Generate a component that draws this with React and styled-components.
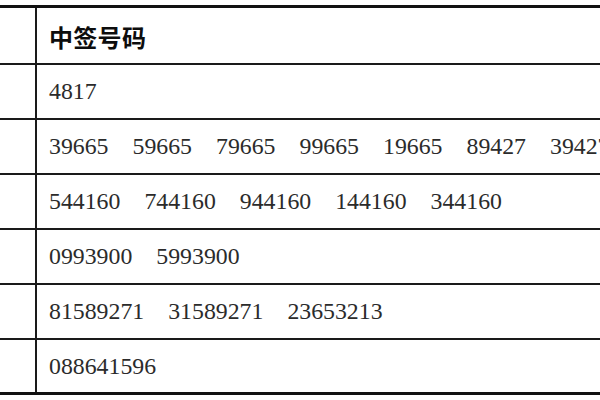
import React from 'react'
import styled, { createGlobalStyle } from 'styled-components'

const GlobalStyle = createGlobalStyle`
  html, body {
    margin: 0;
    padding: 0;
    background: #fff;
    overflow: hidden;
  }
  body {
    width: 600px;
    height: 400px;
  }
`

const rows = [
  ['4817'],
  ['39665', '59665', '79665', '99665', '19665', '89427', '39427'],
  ['544160', '744160', '944160', '144160', '344160'],
  ['0993900', '5993900'],
  ['81589271', '31589271', '23653213'],
  ['088641596'],
]

function App() {
  return (
    <>
      <GlobalStyle />
      <Page>
        <Table>
          <Row $header>
            <SideCell />
            <HeadCell>中签号码</HeadCell>
          </Row>
          {rows.map((nums, i) => (
            <Row key={i} $last={i === rows.length - 1}>
              <SideCell />
              <NumCell>
                {nums.map((n) => (
                  <Num key={n}>{n}</Num>
                ))}
              </NumCell>
            </Row>
          ))}
        </Table>
      </Page>
    </>
  )
}

const Page = styled.div`
  width: 600px;
  height: 400px;
  padding-top: 5px;
  box-sizing: border-box;
  overflow: hidden;
`

const Table = styled.div`
  width: 600px;
  border-top: 3px solid #111;
  border-bottom: 3px solid #111;
  display: flex;
  flex-direction: column;
`

const Row = styled.div`
  display: grid;
  grid-template-columns: 37px 1fr;
  height: ${({ $header, $last }) => ($header ? '55px' : $last ? '52px' : '53px')};
  border-bottom: ${({ $last }) => ($last ? 'none' : '2px solid #1a1a1a')};
`

const SideCell = styled.div`
  border-right: 2px solid #1a1a1a;
`

const HeadCell = styled.div`
  display: flex;
  align-items: center;
  padding-left: 12px;
  padding-top: 1px;
  font-family: "Noto Sans CJK SC", "Liberation Sans", sans-serif;
  font-weight: 700;
  font-size: 24px;
  color: #0d0d0d;
  letter-spacing: 0.3px;
`

const NumCell = styled.div`
  display: flex;
  align-items: center;
  gap: 24px;
  padding-left: 12px;
  white-space: nowrap;
  overflow: hidden;
  font-family: "Liberation Serif", "Times New Roman", serif;
  font-size: 23.8px;
  color: #2b2b2b;
`

const Num = styled.span`
  flex-shrink: 0;
`

export default App
